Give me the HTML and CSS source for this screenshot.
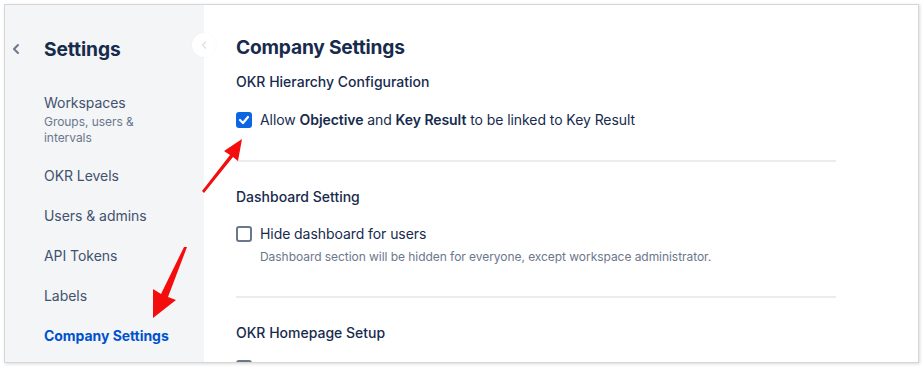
FILE: index.html
```html
<html>
<head>
<link rel="stylesheet" href="styles.css">
</head>
<body>
<div class="frame">
	<div class="sidebar">
		<div class="side-head">
			<svg class="back" width="10" height="12" viewBox="0 0 10 12"><path d="M7 2 L3 6 L7 10" fill="none" stroke="#6b778c" stroke-width="2" stroke-linecap="round" stroke-linejoin="round"/></svg>
			<h2>Settings</h2>
		</div>
		<ul class="nav">
			<li class="nav-item">Workspaces<span class="nav-sub">Groups, users &amp; intervals</span></li>
			<li class="nav-item">OKR Levels</li>
			<li class="nav-item">Users &amp; admins</li>
			<li class="nav-item">API Tokens</li>
			<li class="nav-item">Labels</li>
			<li class="nav-item active">Company Settings</li>
		</ul>
		<div class="collapse">
			<svg width="8" height="10" viewBox="0 0 8 10"><path d="M5.5 2 L2.5 5 L5.5 8" fill="none" stroke="#dfe1e6" stroke-width="1.5" stroke-linecap="round"/></svg>
		</div>
	</div>
	<div class="main">
		<h1>Company Settings</h1>
		<div class="section">
			<h3>OKR Hierarchy Configuration</h3>
			<label class="check">
				<span class="box checked"><svg width="12" height="10" viewBox="0 0 12 10"><path d="M2 5 L5 8 L10 2" fill="none" stroke="#fff" stroke-width="2.2" stroke-linecap="round" stroke-linejoin="round"/></svg></span>
				<span>Allow <b>Objective</b> and <b>Key Result</b> to be linked to Key Result</span>
			</label>
		</div>
		<div class="section">
			<h3>Dashboard Setting</h3>
			<label class="check">
				<span class="box"></span>
				<span>Hide dashboard for users</span>
			</label>
			<p class="hint">Dashboard section will be hidden for everyone, except workspace administrator.</p>
		</div>
		<div class="section last">
			<h3>OKR Homepage Setup</h3>
			<label class="check">
				<span class="box"></span>
				<span></span>
			</label>
		</div>
	</div>
	<svg class="arrow arrow-one" width="50" height="60" viewBox="0 0 50 60">
		<path d="M0 52 L28 16 L22 12 L40 0 L36 22 L31 18 L2 54 Z" fill="#f40d0d"/>
	</svg>
	<svg class="arrow arrow-two" width="40" height="72" viewBox="0 0 40 72">
		<path d="M34 0 L15 50 L23 53 L0 71 L0 42 L8 47 L31 0 Z" fill="#f40d0d"/>
	</svg>
</div>
</body>
</html>
```

FILE: styles.css
```css
body{
	margin:0;
	background:#fff;
	font-family:'Inter','Noto Sans',sans-serif;
	color:#172b4d;
}
.frame{
	position:relative;
	margin:4px 0 0 4px;
	width:913px;
	height:357px;
	border:1px solid #d6d6d6;
	box-shadow:1px 1px 3px rgba(0,0,0,0.15);
	display:flex;
	overflow:hidden;
	background:#fff;
}
.sidebar{
	position:relative;
	width:199px;
	flex-shrink:0;
	background:#f4f5f7;
	padding-top:31px;
}
.side-head{
	display:flex;
	align-items:center;
}
.back{
	margin-left:6px;
	margin-right:23px;
}
.side-head h2{
	margin:0;
	font-size:19.2px;
	font-weight:700;
	letter-spacing:-0.1px;
	line-height:26px;
}
.nav{
	list-style:none;
	margin:0;
	padding:0 0 0 39px;
	margin-top:31px;
}
.nav-item{
	font-size:14px;
	color:#42526e;
	line-height:20px;
	margin-bottom:20px;
	letter-spacing:-0.05px;
}
.nav-sub{
	display:block;
	font-size:12px;
	color:#6b778c;
	line-height:16px;
	margin-top:1px;
	width:110px;
}
.nav-item.active{
	color:#0052cc;
	font-weight:700;
}
.collapse{
	position:absolute;
	top:28px;
	right:-12px;
	width:24px;
	height:24px;
	border-radius:50%;
	background:#fff;
	box-shadow:0 0 2px rgba(9,30,66,0.05);
	display:flex;
	align-items:center;
	justify-content:center;
	z-index:2;
}
.main{
	padding:29px 0 0 32px;
	width:600px;
}
.main h1{
	margin:0;
	font-size:19.2px;
	font-weight:700;
	line-height:26px;
	letter-spacing:-0.2px;
}
.section{
	border-bottom:2px solid #ebecf0;
	padding-bottom:31px;
}
.section.last{
	border-bottom:none;
}
.section h3{
	margin:0;
	padding-top:25px;
	font-size:14px;
	font-weight:500;
	line-height:20px;
}
.main h1 + .section h3{
	padding-top:12px;
}
.check{
	display:flex;
	align-items:center;
	gap:8px;
	margin-top:17px;
	font-size:14px;
	line-height:20px;
	letter-spacing:-0.07px;
}
.check b{
	font-weight:600;
}
.main h1 + .section .check{
	margin-top:18px;
}
.main h1 + .section{
	padding-bottom:30px;
}
.box{
	width:16px;
	height:16px;
	box-sizing:border-box;
	border:2px solid #6b778c;
	border-radius:3px;
	display:flex;
	align-items:center;
	justify-content:center;
}
.box.checked{
	background:#0c66e4;
	border-color:#0c66e4;
}
.hint{
	margin:5px 0 0 24px;
	font-size:12px;
	line-height:16px;
	color:#6b778c;
	letter-spacing:-0.05px;
}
.arrow{
	position:absolute;
	z-index:3;
}
.arrow-one{
	left:197px;
	top:134px;
}
.arrow-two{
	left:148px;
	top:242px;
}
```
